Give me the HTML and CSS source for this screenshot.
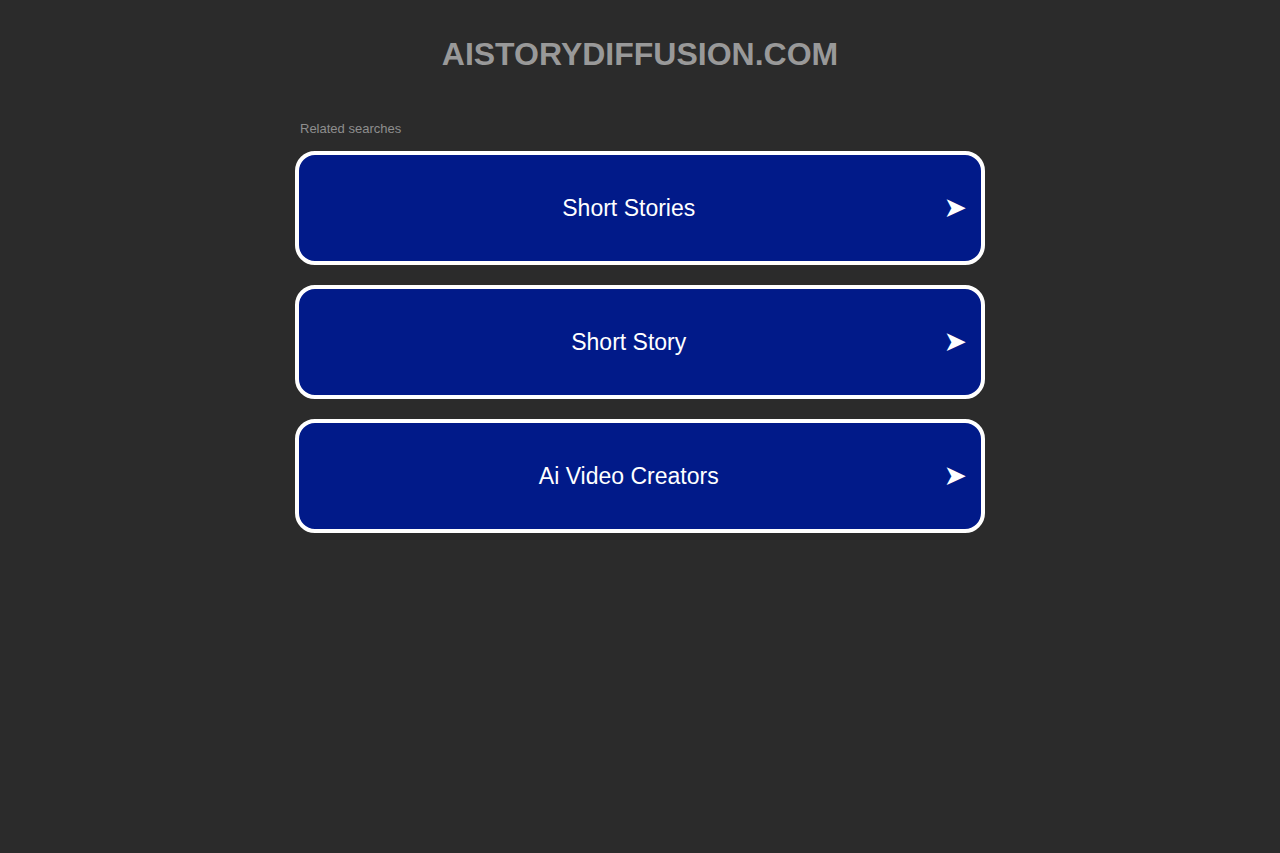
FILE: index.html
```html
<!DOCTYPE html>
<html lang="en">
<head>
    <meta charset="UTF-8">
    <meta name="viewport" content="width=device-width, initial-scale=1.0">
    <title>aistorydiffusion.com</title>
    <link rel="stylesheet" href="styles.css">
</head>
<body>
    <div class="header">
        <h1 class="domain">AISTORYDIFFUSION.COM</h1>
    </div>
    <div class="container">
        <p class="related-title">Related searches</p>
        <ul class="related-list">
            <li><a href="#"><span class="link-text">Short Stories</span><span class="arrow">&#10148;</span></a></li>
            <li><a href="#"><span class="link-text">Short Story</span><span class="arrow">&#10148;</span></a></li>
            <li><a href="#"><span class="link-text">Ai Video Creators</span><span class="arrow">&#10148;</span></a></li>
        </ul>
    </div>
</body>
</html>
```

FILE: styles.css
```css
* {
    padding: 0;
    margin: 0;
    box-sizing: border-box;
    font-family: "Liberation Sans", Arial, sans-serif;
}
body {
    background: #2b2b2b;
}
.header {
    padding-top: 36px;
    text-align: center;
}
.domain {
    font-size: 32px;
    font-weight: bold;
    color: #999999;
    line-height: 37px;
}
.container {
    width: 690px;
    margin: 0 auto;
}
.related-title {
    font-size: 13px;
    color: #8e8e8e;
    padding-left: 5px;
    margin-top: 48px;
    line-height: 15px;
}
.related-list {
    list-style: none;
    margin-top: 15px;
}
.related-list li {
    margin-bottom: 20px;
}
.related-list li a {
    display: flex;
    align-items: center;
    height: 114px;
    padding: 0 14px 0 15px;
    background: #011a89;
    border: 4px solid #ffffff;
    border-radius: 20px;
    color: #ffffff;
    text-decoration: none;
}
.link-text {
    flex-grow: 1;
    text-align: center;
    font-size: 23px;
}
.arrow {
    font-family: "DejaVu Sans", sans-serif;
    font-size: 28px;
    line-height: 1;
}
```
